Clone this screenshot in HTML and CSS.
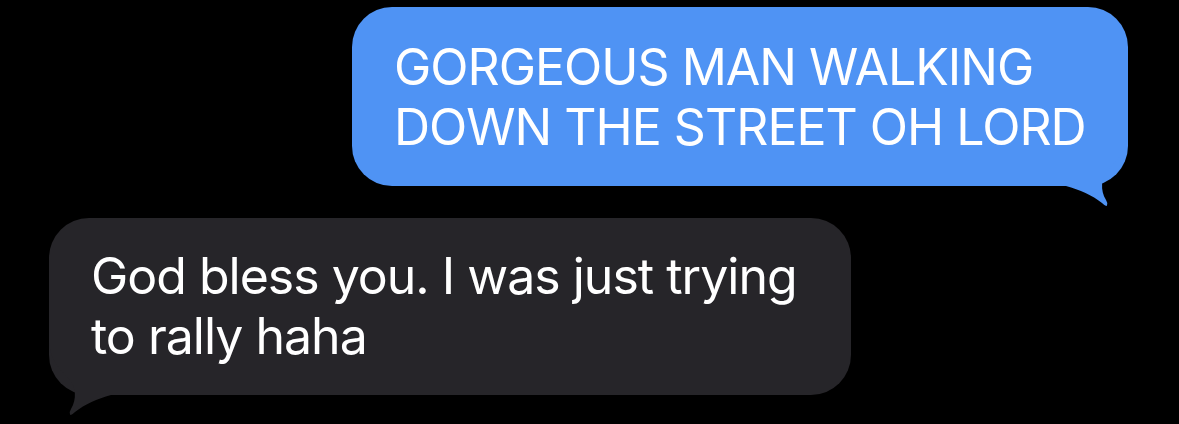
FILE: index.html
```html
<!DOCTYPE html>
<html lang="en">
<head>
<meta charset="utf-8">
<title>Messages</title>
<link rel="stylesheet" href="styles.css">
</head>
<body>
<main class="thread">
  <div class="bubble bubble-sent">
    <p class="bubble-text">GORGEOUS MAN WALKING<br>DOWN THE STREET OH LORD</p>
    <svg class="tail tail-sent" width="80" height="80" viewBox="-70 -60 80 80" aria-hidden="true">
      <path d="M -62 0 C -48 4, -36 9, -26 17 Q -22 21, -21 19.5 Q -20 17, -22 14 C -28 4, -27 -8, -20 -16 C -12 -25, -2 -33, 0 -52 L 0 -60 L -62 -60 Z"/>
    </svg>
  </div>
  <div class="bubble bubble-received">
    <p class="bubble-text">God bless you. I was just trying<br>to rally haha</p>
    <svg class="tail tail-received" width="80" height="80" viewBox="-70 -60 80 80" aria-hidden="true">
      <path d="M -62 0 C -48 4, -36 9, -26 17 Q -22 21, -21 19.5 Q -20 17, -22 14 C -28 4, -27 -8, -20 -16 C -12 -25, -2 -33, 0 -52 L 0 -60 L -62 -60 Z"/>
    </svg>
  </div>
</main>
</body>
</html>
```

FILE: styles.css
```css
html, body {
  margin: 0;
  padding: 0;
  background: #000;
}

body {
  width: 1179px;
  height: 424px;
  overflow: hidden;
  font-family: "Inter", "Noto Sans", sans-serif;
}

.thread {
  display: flex;
  flex-direction: column;
  gap: 32px;
  padding-top: 7px;
}

.bubble {
  position: relative;
  box-sizing: border-box;
  border-radius: 40px;
  color: #fff;
}

.bubble-text {
  position: relative;
  z-index: 1;
  margin: 0;
  font-size: 50px;
  line-height: 60px;
  letter-spacing: -1px;
  white-space: nowrap;
}

.bubble-sent {
  align-self: flex-end;
  margin-right: 51px;
  width: 776px;
  height: 179px;
  padding: 30px 0 0 42px;
  background: #4f93f4;
}

.bubble-received {
  align-self: flex-start;
  margin-left: 49px;
  width: 802px;
  height: 177px;
  padding: 28px 0 0 42px;
  background: #262529;
}

.tail {
  position: absolute;
  bottom: -20px;
  overflow: visible;
}

.tail-sent {
  right: -10px;
  fill: #4f93f4;
}

.tail-received {
  left: -10px;
  fill: #262529;
  transform: scaleX(-1);
}
```
